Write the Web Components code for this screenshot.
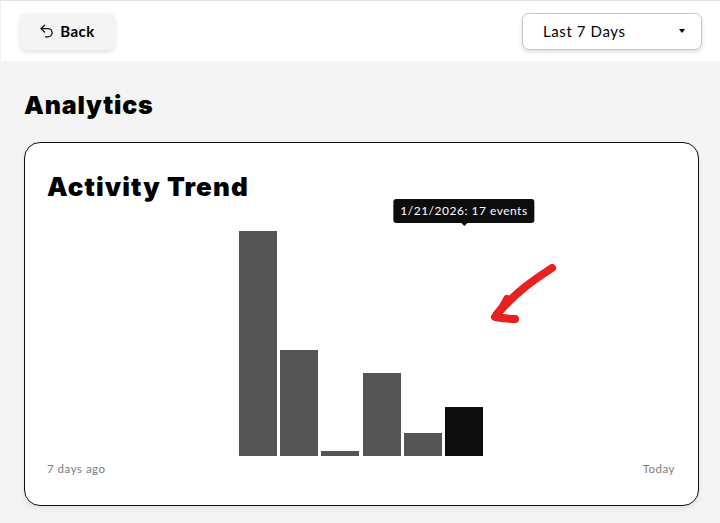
<!DOCTYPE html>
<html>
<head>
<meta charset="utf-8">
<title>Analytics</title>
<style>
  html, body { margin: 0; height: 100%; overflow: hidden; }
  body { background: #f4f4f4; color: #000; font-family: Lato, "Noto Sans", sans-serif; }
</style>
</head>
<body>
<top-bar>
  <back-button slot="start">Back</back-button>
  <range-select slot="end">Last 7 Days</range-select>
</top-bar>
<page-main heading="Analytics">
  <trend-card heading="Activity Trend">
    <bar-chart tip="1/21/2026: 17 events" values="225,106,5,83,23,49" active="5"></bar-chart>
    <span slot="from">7 days ago</span>
    <span slot="to">Today</span>
  </trend-card>
</page-main>

<script>
class TopBar extends HTMLElement {
  constructor() {
    super();
    this.attachShadow({ mode: 'open' }).innerHTML = `
    <style>
      :host {
        display: flex;
        justify-content: space-between;
        align-items: center;
        box-sizing: border-box;
        height: 61px;
        padding: 0 18px 0 20px;
        background: #fff;
        border-top: 1px solid #e2e2e2;
        border-left: 1px solid #efefef;
      }
      ::slotted([slot=start]) { margin-left: -1px; }
    </style>
    <slot name="start"></slot>
    <slot name="end"></slot>`;
  }
}
customElements.define('top-bar', TopBar);

class BackButton extends HTMLElement {
  constructor() {
    super();
    this.attachShadow({ mode: 'open' }).innerHTML = `
    <style>
      :host {
        display: flex;
        align-items: center;
        justify-content: center;
        gap: 7px;
        box-sizing: border-box;
        width: 95px;
        height: 37px;
        background: #f4f4f4;
        border-radius: 7px;
        box-shadow: 0 2px 4px rgba(0, 0, 0, .13);
        font-size: 15px;
        font-weight: 700;
        letter-spacing: .5px;
      }
      svg { width: 13px; height: 14px; }
    </style>
    <svg viewBox="0 0 13 14" fill="none" stroke="#111" stroke-width="1.3" stroke-linecap="round" stroke-linejoin="round">
      <path d="M4.6 1.2 1 4.6 4.6 8"/>
      <path d="M1.2 4.6H8a4 4 0 0 1 0 8.2H5.4"/>
    </svg>
    <slot></slot>`;
  }
}
customElements.define('back-button', BackButton);

class RangeSelect extends HTMLElement {
  constructor() {
    super();
    this.attachShadow({ mode: 'open' }).innerHTML = `
    <style>
      :host {
        display: flex;
        align-items: center;
        justify-content: space-between;
        box-sizing: border-box;
        width: 180px;
        height: 37px;
        padding: 0 16px 0 20px;
        background: #fff;
        border: 1px solid #c8c8c8;
        border-radius: 7px;
        box-shadow: 0 2px 4px rgba(0, 0, 0, .14);
        font-size: 15px;
        letter-spacing: .6px;
      }
      i { border: 3.5px solid transparent; border-top: 4px solid #000; border-bottom: 0; }
    </style>
    <slot></slot><i></i>`;
  }
}
customElements.define('range-select', RangeSelect);

class PageMain extends HTMLElement {
  constructor() {
    super();
    this.attachShadow({ mode: 'open' }).innerHTML = `
    <style>
      :host { display: block; padding: 27px 21px 0 24px; }
      h1 {
        margin: 0 0 19px;
        font-family: Inter, Lato, sans-serif;
        font-size: 25px;
        line-height: 35px;
        font-weight: 900;
        letter-spacing: .8px;
      }
    </style>
    <h1></h1>
    <slot></slot>`;
    this.shadowRoot.querySelector('h1').textContent = this.getAttribute('heading');
  }
}
customElements.define('page-main', PageMain);

class TrendCard extends HTMLElement {
  constructor() {
    super();
    this.attachShadow({ mode: 'open' }).innerHTML = `
    <style>
      :host {
        display: block;
        position: relative;
        box-sizing: border-box;
        height: 364px;
        padding: 27px 23px 0 22px;
        background: #fff;
        border: 1px solid #111;
        border-radius: 16px;
        box-shadow: 0 3px 6px rgba(0, 0, 0, .07);
      }
      h2 {
        margin: 0;
        font-family: Inter, Lato, sans-serif;
        font-size: 26px;
        line-height: 34px;
        font-weight: 900;
        letter-spacing: 1.1px;
      }
      .legend {
        display: flex;
        justify-content: space-between;
        margin-top: 5px;
        font-size: 11.5px;
        line-height: 15px;
        letter-spacing: .5px;
        color: #7c7c7c;
      }
      .arrow { position: absolute; left: 462px; top: 118px; }
    </style>
    <h2></h2>
    <slot></slot>
    <div class="legend"><slot name="from"></slot><slot name="to"></slot></div>
    <svg class="arrow" width="72" height="66" viewBox="0 0 72 66" fill="none" stroke="#e8201f" stroke-linecap="round" stroke-linejoin="round">
      <path stroke-width="8" d="M65 7C50 17 33 27 10 53"/>
      <path stroke-width="8" d="M20 38C17 45 13 50 8 56 14 57 21 58 28 58"/>
    </svg>`;
    this.shadowRoot.querySelector('h2').textContent = this.getAttribute('heading');
  }
}
customElements.define('trend-card', TrendCard);

class BarChart extends HTMLElement {
  constructor() {
    super();
    this.attachShadow({ mode: 'open' }).innerHTML = `
    <style>
      :host {
        display: flex;
        justify-content: center;
        align-items: flex-end;
        gap: 3.2px;
        height: 225px;
        margin-top: 27px;
        position: relative;
      }
      .bar { width: 38px; background: #555; }
      .bar.active { background: #0d0d0d; position: relative; }
      .tip {
        position: absolute;
        left: 50%;
        bottom: 233px;
        transform: translateX(-50%);
        padding: 0 7px;
        height: 24px;
        line-height: 24px;
        white-space: nowrap;
        background: #0d0d0d;
        color: #fff;
        border-radius: 3px;
        font-size: 12px;
        letter-spacing: .5px;
      }
      .tip::after {
        content: '';
        position: absolute;
        left: 50%;
        top: 100%;
        margin-left: -3px;
        border: 3px solid transparent;
        border-top-color: #0d0d0d;
        border-bottom: 0;
      }
    </style>`;
    const values = this.getAttribute('values').split(',');
    const active = Number(this.getAttribute('active'));
    values.forEach((v, i) => {
      const bar = document.createElement('div');
      bar.className = i === active ? 'bar active' : 'bar';
      bar.style.height = v + 'px';
      if (i === active) {
        const tip = document.createElement('div');
        tip.className = 'tip';
        tip.textContent = this.getAttribute('tip');
        bar.append(tip);
      }
      this.shadowRoot.append(bar);
    });
  }
}
customElements.define('bar-chart', BarChart);
</script>
</body>
</html>
